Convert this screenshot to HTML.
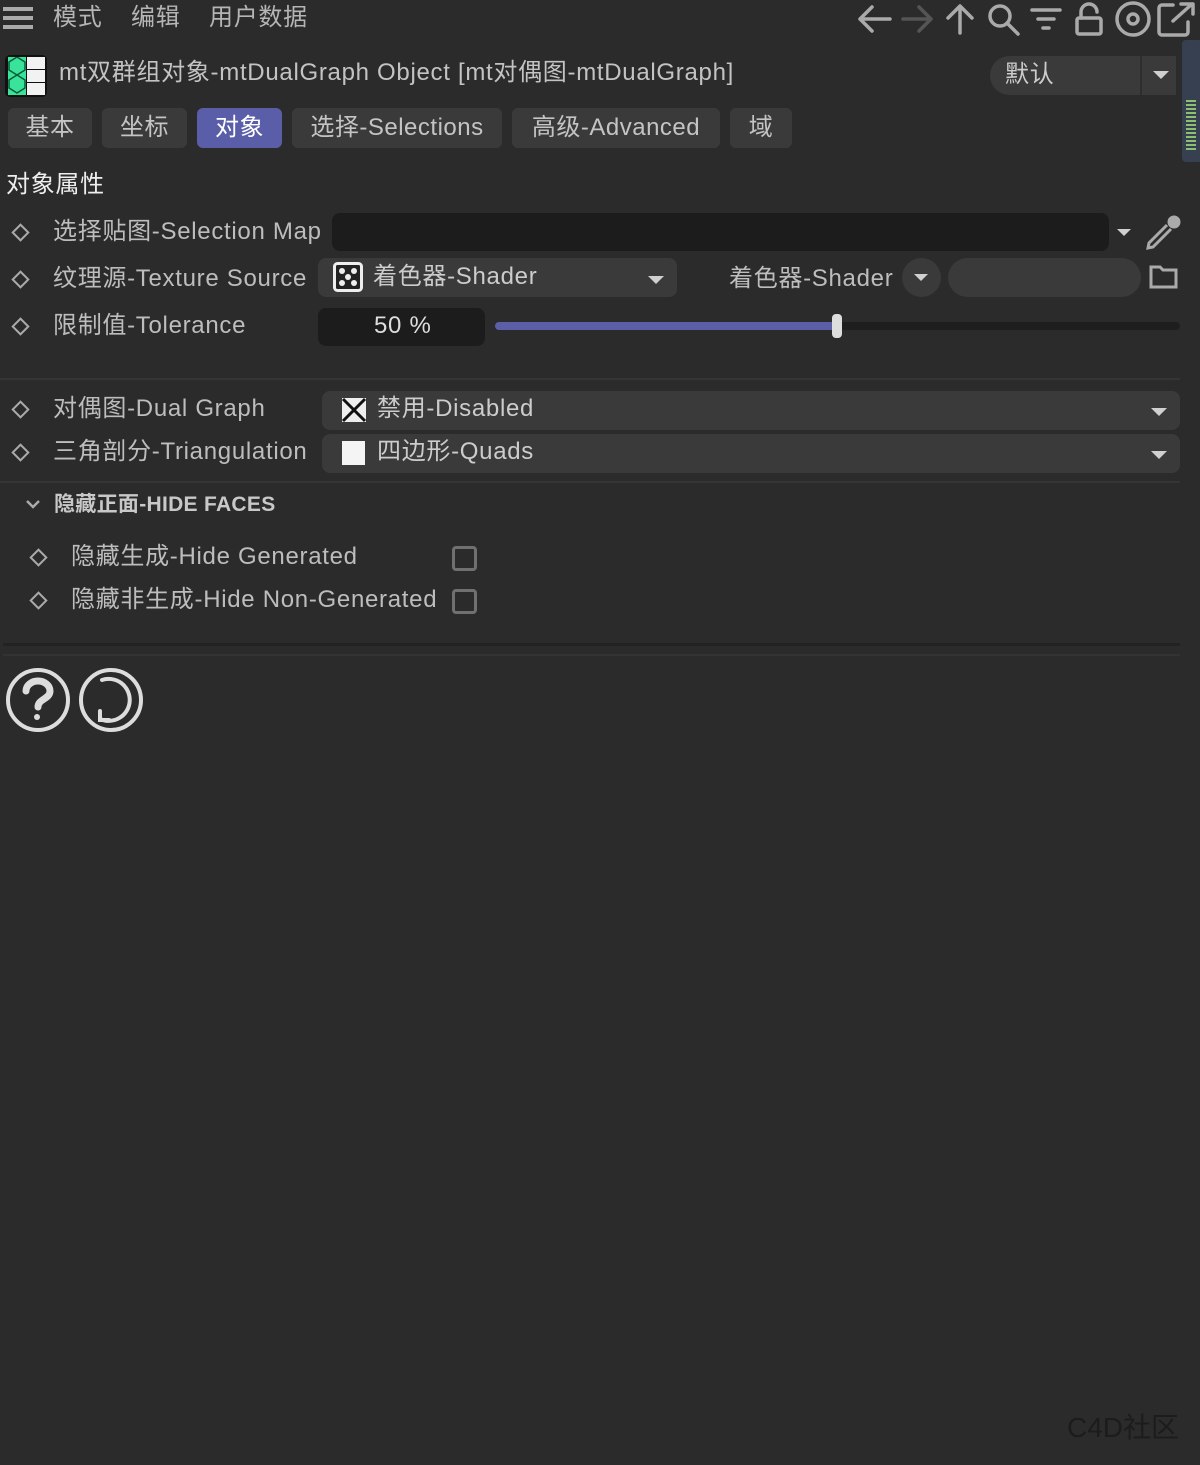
<!DOCTYPE html>
<html><head><meta charset="utf-8">
<style>
*{margin:0;padding:0;box-sizing:border-box}
body{width:1200px;height:1465px;background:#2b2b2b;position:relative;overflow:hidden;font-family:"Liberation Sans","Noto Sans CJK SC",sans-serif;color:#bdbdbd}
.a{position:absolute;white-space:nowrap}
.t{font-size:24px;line-height:30px;letter-spacing:0.7px}
.tab{position:absolute;top:108px;height:40px;background:#3a3a3a;border-radius:6px;font-size:24px;line-height:40px;text-align:center;color:#c4c4c4;letter-spacing:0.5px}
.dia{position:absolute;width:13px;height:13px;border:2.5px solid #aaa;transform:rotate(45deg)}
.box{position:absolute;border-radius:8px}
.arr{position:absolute;width:0;height:0;border-left:8px solid transparent;border-right:8px solid transparent;border-top:8px solid #d0d0d0}
.cb{position:absolute;width:25px;height:25px;border:3px solid #707070;border-radius:4px}
</style></head><body>

<div class="a" style="left:3px;top:7px;width:30px;height:4px;background:#aaa"></div>
<div class="a" style="left:3px;top:16px;width:30px;height:4px;background:#aaa"></div>
<div class="a" style="left:3px;top:25px;width:30px;height:4px;background:#aaa"></div>
<div class="a t" style="left:53px;top:3px;color:#b5b5b5">模式</div>
<div class="a t" style="left:131px;top:3px;color:#b5b5b5">编辑</div>
<div class="a t" style="left:209px;top:3px;color:#b5b5b5">用户数据</div>

<svg class="a" style="left:855px;top:0" width="345" height="40" fill="none" stroke-width="3.5" stroke-linecap="round" stroke-linejoin="round">
<g stroke="#aaa"><path d="M5 19H35M17 7L5 19L17 31"/></g>
<g stroke="#555"><path d="M48 19H76M64 7L76 19L64 31"/></g>
<g stroke="#aaa"><path d="M105 33V6M93 18L105 6L117 18"/>
<circle cx="145" cy="16" r="10"/><path d="M152 23L163 34"/>
<path d="M177 10H205M183 19H199M188 28H194"/>
<rect x="222" y="18" width="24" height="16" rx="2"/><path d="M226 18V12a8 8 0 0 1 16 0"/>
<circle cx="278" cy="19" r="16"/><circle cx="278" cy="19" r="5"/>
<path d="M318 5H307a3 3 0 0 0-3 3V32a3 3 0 0 0 3 3H330a3 3 0 0 0 3-3V22M318 21L337 4M326 4H338V14"/></g>
</svg>

<div class="a" style="left:5px;top:55px;width:42px;height:42px;background:#111;border-radius:5px"></div>
<div class="a" style="left:8px;top:57px;width:18px;height:38px;background:#39e39a"></div>
<svg class="a" style="left:8px;top:57px" width="18" height="38" fill="none" stroke="#0a5a3a" stroke-width="1.5"><path d="M9 0L17 5V13L9 18L1 13V5Z M9 18L17 23V31L9 36L1 31V23Z"/></svg>
<div class="a" style="left:27px;top:57px;width:18px;height:12px;background:#f2f2f2"></div>
<div class="a" style="left:27px;top:70px;width:18px;height:12px;background:#f2f2f2"></div>
<div class="a" style="left:27px;top:83px;width:18px;height:12px;background:#f2f2f2"></div>
<div class="a t" style="left:59px;top:58px;color:#c3c3c3">mt双群组对象-mtDualGraph Object [mt对偶图-mtDualGraph]</div>
<div class="box" style="left:990px;top:56px;width:186px;height:39px;background:#3a3a3a;border-radius:20px 0 0 20px"></div>
<div class="a" style="left:1140px;top:56px;width:2px;height:39px;background:#2e2e2e"></div>
<div class="a t" style="left:1005px;top:60px;color:#ccc">默认</div>
<div class="arr" style="left:1153px;top:71px"></div>
<div class="a" style="left:1182px;top:40px;width:18px;height:122px;background:#364050;border-radius:4px 0 0 4px"></div>
<div class="a" style="left:1186px;top:100px;width:10px;height:52px;background:repeating-linear-gradient(#8cc070 0 2px,#364050 2px 4px)"></div>

<div class="tab" style="left:8px;width:84px">基本</div>
<div class="tab" style="left:102px;width:85px">坐标</div>
<div class="tab" style="left:197px;width:85px;background:#5a5ea8;color:#fff">对象</div>
<div class="tab" style="left:292px;width:210px">选择-Selections</div>
<div class="tab" style="left:512px;width:208px">高级-Advanced</div>
<div class="tab" style="left:730px;width:62px">域</div>

<div class="a t" style="left:6px;top:170px;color:#eee">对象属性</div>

<div class="dia" style="left:14px;top:226px"></div>
<div class="a t" style="left:53px;top:217px">选择贴图-Selection Map</div>
<div class="box" style="left:332px;top:213px;width:777px;height:38px;background:#1c1c1c"></div>
<div class="arr" style="left:1117px;top:229px;border-width:7px 7px 0"></div>
<svg class="a" style="left:1143px;top:213px" width="40" height="38" fill="none" stroke="#aaa" stroke-width="3"><path d="M24 12L6 30L5 35L10 34L28 16"/><circle cx="31" cy="9" r="5" fill="#aaa"/></svg>

<div class="dia" style="left:14px;top:273px"></div>
<div class="a t" style="left:53px;top:264px">纹理源-Texture Source</div>
<div class="box" style="left:318px;top:258px;width:359px;height:39px;background:#3a3a3a"></div>
<svg class="a" style="left:333px;top:262px" width="30" height="30"><rect x="1.5" y="1.5" width="27" height="27" rx="3" fill="#222" stroke="#eee" stroke-width="3"/><g fill="#eee"><circle cx="9" cy="9" r="3"/><circle cx="21" cy="9" r="3"/><circle cx="15" cy="15" r="3"/><circle cx="9" cy="21" r="3"/><circle cx="21" cy="21" r="3"/></g></svg>
<div class="a t" style="left:373px;top:262px;color:#ccc">着色器-Shader</div>
<div class="arr" style="left:648px;top:276px"></div>
<div class="a t" style="left:729px;top:264px">着色器-Shader</div>
<div class="box" style="left:902px;top:258px;width:39px;height:39px;border-radius:50%;background:#3a3a3a"></div>
<div class="arr" style="left:914px;top:274px;border-width:7px 7px 0"></div>
<div class="box" style="left:948px;top:258px;width:193px;height:39px;border-radius:20px;background:#3a3a3a"></div>
<svg class="a" style="left:1149px;top:264px" width="30" height="26" fill="none" stroke="#aaa" stroke-width="3"><path d="M2 3H11L14 6H27V23H2Z"/></svg>

<div class="dia" style="left:14px;top:320px"></div>
<div class="a t" style="left:53px;top:311px">限制值-Tolerance</div>
<div class="box" style="left:318px;top:308px;width:167px;height:38px;background:#1c1c1c"></div>
<div class="a t" style="left:374px;top:311px;color:#ddd">50 %</div>
<div class="a" style="left:495px;top:322px;width:685px;height:8px;background:#1e1e1e;border-radius:4px"></div>
<div class="a" style="left:495px;top:322px;width:342px;height:8px;background:#5c5fa8;border-radius:4px"></div>
<div class="a" style="left:832px;top:314px;width:10px;height:24px;background:#ddd;border-radius:4px"></div>

<div class="a" style="left:0;top:378px;width:1180px;height:2px;background:#353535"></div>

<div class="dia" style="left:14px;top:403px"></div>
<div class="a t" style="left:53px;top:394px">对偶图-Dual Graph</div>
<div class="box" style="left:322px;top:391px;width:858px;height:39px;background:#3a3a3a"></div>
<svg class="a" style="left:341px;top:397px" width="26" height="26"><rect x="1" y="1" width="24" height="24" fill="#eee"/><path d="M2 2L24 24M24 2L2 24" stroke="#111" stroke-width="3"/></svg>
<div class="a t" style="left:377px;top:394px;color:#ccc">禁用-Disabled</div>
<div class="arr" style="left:1151px;top:408px"></div>

<div class="dia" style="left:14px;top:446px"></div>
<div class="a t" style="left:53px;top:437px">三角剖分-Triangulation</div>
<div class="box" style="left:322px;top:434px;width:858px;height:39px;background:#3a3a3a"></div>
<div class="a" style="left:342px;top:441px;width:23px;height:24px;background:#f4f4f4"></div>
<div class="a t" style="left:377px;top:437px;color:#ccc">四边形-Quads</div>
<div class="arr" style="left:1151px;top:451px"></div>

<div class="a" style="left:0;top:481px;width:1180px;height:2px;background:#353535"></div>

<svg class="a" style="left:25px;top:498px" width="16" height="12" fill="none" stroke="#aaa" stroke-width="2.5"><path d="M2 3L8 9L14 3"/></svg>
<div class="a" style="left:54px;top:492px;font-size:21px;line-height:26px;font-weight:bold;color:#c8c8c8;letter-spacing:0.3px">隐藏正面-HIDE FACES</div>

<div class="dia" style="left:32px;top:551px"></div>
<div class="a t" style="left:71px;top:542px">隐藏生成-Hide Generated</div>
<div class="cb" style="left:452px;top:546px"></div>
<div class="dia" style="left:32px;top:594px"></div>
<div class="a t" style="left:71px;top:585px">隐藏非生成-Hide Non-Generated</div>
<div class="cb" style="left:452px;top:589px"></div>

<div class="a" style="left:3px;top:643px;width:1177px;height:3px;background:#222"></div>
<div class="a" style="left:3px;top:654px;width:1177px;height:2px;background:#333"></div>

<svg class="a" style="left:6px;top:667px" width="140" height="66" fill="none" stroke="#ddd" stroke-width="4" stroke-linecap="round">
<circle cx="32" cy="33" r="30"/>
<path d="M20 24a12 10 0 0 1 24 0c0 8-12 8-12 16" stroke-width="7"/><circle cx="31" cy="50" r="3" fill="#ddd" stroke="none"/>
<circle cx="105" cy="33" r="30"/>
<path d="M96 13A21 21 0 1 1 94 52"/><path d="M94 44L94 53L103 53"/>
</svg>

<div class="a" style="left:1067px;top:1410px;font-size:28px;line-height:36px;color:#1c1c1c">C4D社区</div>
</body></html>
